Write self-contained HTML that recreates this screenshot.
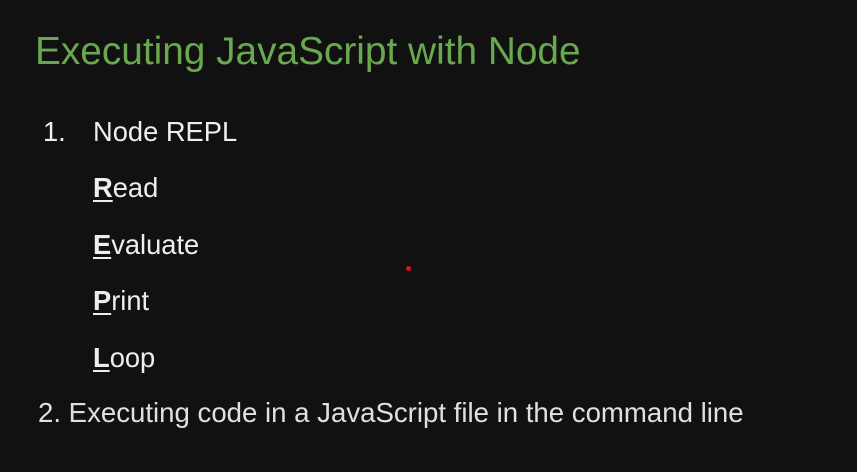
<!DOCTYPE html>
<html><head><meta charset="utf-8"><style>
html,body{margin:0;padding:0;}
body{width:857px;height:472px;background:#111111;position:relative;overflow:hidden;font-family:"Liberation Sans",Arial,sans-serif;}
.t{position:absolute;white-space:nowrap;line-height:1;}
.title{left:35px;top:33px;font-size:38.8px;color:#6aa84f;}
.w{color:#eeeeee;font-size:27.3px;}
u{text-decoration:underline;text-underline-offset:3px;font-weight:bold;}
.dot{position:absolute;left:406px;top:266px;width:5px;height:5px;border-radius:50%;background:#e01010;}
</style></head><body>
<div class="t title">Executing JavaScript with Node</div>
<div class="t w" style="left:43px;top:118px;">1.</div>
<div class="t w" style="left:93px;top:118px;">Node REPL</div>
<div class="t w" style="left:93px;top:174px;"><u>R</u>ead</div>
<div class="t w" style="left:93px;top:231px;"><u>E</u>valuate</div>
<div class="t w" style="left:93px;top:287px;"><u>P</u>rint</div>
<div class="t w" style="left:93px;top:344px;"><u>L</u>oop</div>
<div class="t w" style="left:38px;top:399px;font-size:27.6px;color:#e0e0e0;">2. Executing code in a JavaScript file in the command line</div>
<div class="dot"></div>
</body></html>
